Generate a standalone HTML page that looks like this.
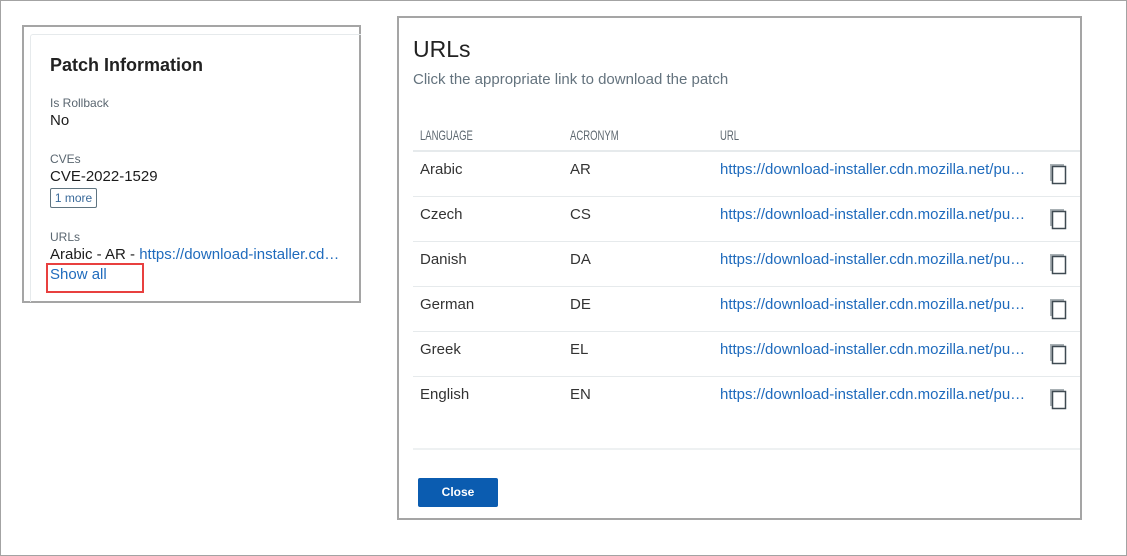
<!DOCTYPE html>
<html><head><meta charset="utf-8"><style>
*{margin:0;padding:0;box-sizing:border-box}
body{width:1127px;height:556px;background:#fff;font-family:"Liberation Sans",sans-serif;position:relative;overflow:hidden}
.frame{position:absolute;left:0;top:0;width:1127px;height:556px;border:1px solid #a3a3a3}
.left{position:absolute;left:22px;top:25px;width:339px;height:278px;border:2px solid #a5a5a5}
.card{position:absolute;left:30px;top:34px;width:331px;height:268px;border:1px solid #e6eaec;border-right:none;border-bottom:none;border-radius:3px 0 0 0}
.a{position:absolute;left:50px;white-space:nowrap}
.lbl{font-size:12px;color:#5a6670}
.val{font-size:15px;color:#1b1b1b}
.dlg{position:absolute;left:397px;top:16px;width:685px;height:504px;border:2px solid #a5a5a5;background:#fff}
.t{position:absolute;white-space:nowrap}
.hd{font-family:"Liberation Sans",sans-serif;font-size:14px;color:#5e6870;top:127px;transform:scaleX(0.68);transform-origin:0 0}
.line{position:absolute;left:413px;width:667px;height:1px;background:#e6eaec}
.cell{font-size:15px;color:#333}
.url{font-size:15px;color:#1f6bbd}
.ic{position:absolute;left:1048px}
</style></head><body>
<div class="frame"></div>
<div class="left"></div>
<div class="card"></div>
<div class="a" style="top:55px;font-size:18px;font-weight:bold;color:#222">Patch Information</div>
<div class="a lbl" style="top:96px">Is Rollback</div>
<div class="a val" style="top:112px">No</div>
<div class="a lbl" style="top:152px">CVEs</div>
<div class="a val" style="top:168px">CVE-2022-1529</div>
<div class="a" style="top:188px;left:50px;width:47px;height:20px;border:1px solid #5f7480;border-radius:2px;font-size:12px;color:#3a6a9a;line-height:18px;text-align:center">1 more</div>
<div class="a lbl" style="top:230px">URLs</div>
<div class="a val" style="top:246px">Arabic - AR - <span style="color:#1f6bbd">https://download-installer.cd…</span></div>
<div class="a" style="top:266px;font-size:15px;color:#1f6bbd">Show all</div>
<div style="position:absolute;left:46px;top:263px;width:98px;height:30px;border:2px solid #e8403f"></div>

<div class="dlg"></div>
<div class="t" style="left:413px;top:36px;font-size:23px;color:#222">URLs</div>
<div class="t" style="left:413px;top:71px;font-size:15px;color:#64737e">Click the appropriate link to download the patch</div>
<div class="t hd" style="left:420px">LANGUAGE</div>
<div class="t hd" style="left:570px">ACRONYM</div>
<div class="t hd" style="left:720px">URL</div>
<div class="line" style="top:150px;height:2px"></div>

<div class="t cell" style="left:420px;top:161px">Arabic</div><div class="t cell" style="left:570px;top:161px">AR</div><div class="t url" style="left:720px;top:161px">https://download-installer.cdn.mozilla.net/pu…</div>
<div class="line" style="top:196px"></div>
<div class="t cell" style="left:420px;top:206px">Czech</div><div class="t cell" style="left:570px;top:206px">CS</div><div class="t url" style="left:720px;top:206px">https://download-installer.cdn.mozilla.net/pu…</div>
<div class="line" style="top:241px"></div>
<div class="t cell" style="left:420px;top:251px">Danish</div><div class="t cell" style="left:570px;top:251px">DA</div><div class="t url" style="left:720px;top:251px">https://download-installer.cdn.mozilla.net/pu…</div>
<div class="line" style="top:286px"></div>
<div class="t cell" style="left:420px;top:296px">German</div><div class="t cell" style="left:570px;top:296px">DE</div><div class="t url" style="left:720px;top:296px">https://download-installer.cdn.mozilla.net/pu…</div>
<div class="line" style="top:331px"></div>
<div class="t cell" style="left:420px;top:341px">Greek</div><div class="t cell" style="left:570px;top:341px">EL</div><div class="t url" style="left:720px;top:341px">https://download-installer.cdn.mozilla.net/pu…</div>
<div class="line" style="top:376px"></div>
<div class="t cell" style="left:420px;top:386px">English</div><div class="t cell" style="left:570px;top:386px">EN</div><div class="t url" style="left:720px;top:386px">https://download-installer.cdn.mozilla.net/pu…</div>
<div class="line" style="top:448px;height:2px;background:#eef1f2"></div>

<svg class="ic" style="top:162px" width="20" height="24"><path d="M3 19V3h13" fill="none" stroke="#a8b0b4" stroke-width="2"/><rect x="4.5" y="4.5" width="13" height="17" fill="#fff" stroke="#3f4a52" stroke-width="1.5"/></svg>
<svg class="ic" style="top:207px" width="20" height="24"><path d="M3 19V3h13" fill="none" stroke="#a8b0b4" stroke-width="2"/><rect x="4.5" y="4.5" width="13" height="17" fill="#fff" stroke="#3f4a52" stroke-width="1.5"/></svg>
<svg class="ic" style="top:252px" width="20" height="24"><path d="M3 19V3h13" fill="none" stroke="#a8b0b4" stroke-width="2"/><rect x="4.5" y="4.5" width="13" height="17" fill="#fff" stroke="#3f4a52" stroke-width="1.5"/></svg>
<svg class="ic" style="top:297px" width="20" height="24"><path d="M3 19V3h13" fill="none" stroke="#a8b0b4" stroke-width="2"/><rect x="4.5" y="4.5" width="13" height="17" fill="#fff" stroke="#3f4a52" stroke-width="1.5"/></svg>
<svg class="ic" style="top:342px" width="20" height="24"><path d="M3 19V3h13" fill="none" stroke="#a8b0b4" stroke-width="2"/><rect x="4.5" y="4.5" width="13" height="17" fill="#fff" stroke="#3f4a52" stroke-width="1.5"/></svg>
<svg class="ic" style="top:387px" width="20" height="24"><path d="M3 19V3h13" fill="none" stroke="#a8b0b4" stroke-width="2"/><rect x="4.5" y="4.5" width="13" height="17" fill="#fff" stroke="#3f4a52" stroke-width="1.5"/></svg>

<div style="position:absolute;left:418px;top:478px;width:80px;height:29px;background:#0b5cb0;border-radius:2px;color:#fff;font-size:12px;font-weight:bold;text-align:center;line-height:29px">Close</div>
</body></html>
